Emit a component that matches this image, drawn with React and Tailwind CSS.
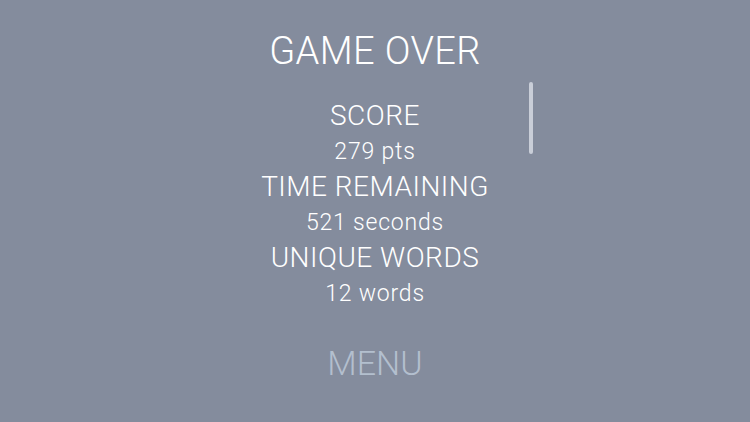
import React from "react";

const stats = [
    { label: "SCORE", value: "279 pts" },
    { label: "TIME REMAINING", value: "521 seconds" },
    { label: "UNIQUE WORDS", value: "12 words" },
];

function App() {
    return (
        <div
            className="relative w-[750px] h-[422px] overflow-hidden bg-[#848c9d] flex flex-col items-center text-white font-light"
            style={{ fontFamily: 'Roboto, "Liberation Sans", Arial, sans-serif' }}
        >
            {/* Titulo */}
            <h1 className="mt-[27px] text-[38px] leading-[48px] font-light tracking-[0.4px]">GAME OVER</h1>

            {/* Resultados */}
            <div className="mt-[23px] flex flex-col items-center">
                {stats.map((item) => (
                    <React.Fragment key={item.label}>
                        <div className="text-[28px] leading-[35.5px] tracking-[0.5px]">{item.label}</div>
                        <div className="text-[23px] leading-[35.5px] tracking-[0.8px]">{item.value}</div>
                    </React.Fragment>
                ))}
            </div>

            {/* Boton menu */}
            <button className="mt-[30px] text-[34px] leading-[44px] font-light text-[#b3bfce]">MENU</button>

            {/* Barra de scroll */}
            <div className="absolute left-[529px] top-[82px] w-[4px] h-[72px] rounded-full bg-[#c9ced8]" />
        </div>
    );
}

export default App;
